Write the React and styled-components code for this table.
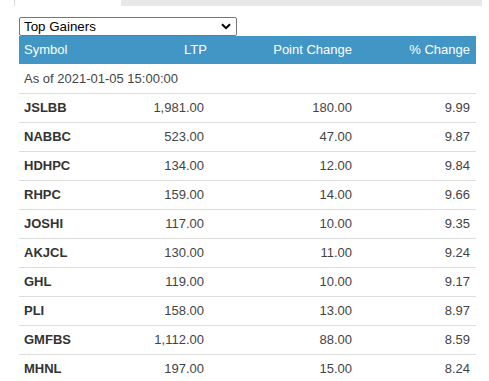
import React from 'react';
import styled, { createGlobalStyle } from 'styled-components';

const rows = [
  ['JSLBB', '1,981.00', '180.00', '9.99'],
  ['NABBC', '523.00', '47.00', '9.87'],
  ['HDHPC', '134.00', '12.00', '9.84'],
  ['RHPC', '159.00', '14.00', '9.66'],
  ['JOSHI', '117.00', '10.00', '9.35'],
  ['AKJCL', '130.00', '11.00', '9.24'],
  ['GHL', '119.00', '10.00', '9.17'],
  ['PLI', '158.00', '13.00', '8.97'],
  ['GMFBS', '1,112.00', '88.00', '8.59'],
  ['MHNL', '197.00', '15.00', '8.24'],
];

const GlobalStyle = createGlobalStyle`
  html, body {
    margin: 0;
    padding: 0;
    background: #fff;
    font-family: "Liberation Sans", Arial, sans-serif;
    font-size: 13px;
    color: #333;
  }
`;

const Wrapper = styled.div`
  margin-left: 14px;
  width: 468px;
`;

const TabStrip = styled.div`
  display: flex;
  height: 6px;
`;

const ActiveTab = styled.div`
  width: 106px;
  border-left: 1px solid #dcdcdc;
  background: #fff;
`;

const RestTabs = styled.div`
  flex: 1;
  background: #e8e8e8;
`;

const Panel = styled.div`
  padding: 11px 6px 0 5px;
`;

const SelectBox = styled.div`
  position: relative;
  width: 218px;
  height: 19px;
`;

const Select = styled.select`
  appearance: none;
  width: 100%;
  height: 100%;
  margin: 0;
  padding: 0 0 0 4px;
  border: 1px solid #767676;
  border-radius: 2px;
  background: #fff;
  font-family: "Liberation Sans", Arial, sans-serif;
  font-size: 13.33px;
  color: #000;
  outline: none;
`;

const Chevron = styled.svg`
  position: absolute;
  right: 6px;
  top: 6px;
  pointer-events: none;
`;

const Table = styled.table`
  width: 457px;
  table-layout: fixed;
  border-collapse: collapse;
`;

const HeadCell = styled.th`
  background: #4296c5;
  color: #fff;
  font-weight: normal;
  text-align: ${(p) => (p.$right ? 'right' : 'left')};
  padding: 5px 6px 5px 5px;
  line-height: 18px;
  height: 18px;
`;

const Row = styled.tr`
  border-top: 1px solid ${(p) => p.$line || '#dddddd'};
`;

const Cell = styled.td`
  text-align: ${(p) => (p.$right ? 'right' : 'left')};
  font-weight: ${(p) => (p.$bold ? 'bold' : 'normal')};
  color: ${(p) => (p.$bold ? '#333' : '#444')};
  padding: 5px ${(p) => p.$pr || 6}px 5px 5px;
  line-height: 18px;
  white-space: nowrap;
`;

export default function App() {
  return (
    <>
      <GlobalStyle />
      <Wrapper>
        <TabStrip>
          <ActiveTab />
          <RestTabs />
        </TabStrip>
        <Panel>
          <SelectBox>
            <Select defaultValue="gainers">
              <option value="gainers">Top Gainers</option>
              <option value="losers">Top Losers</option>
            </Select>
            <Chevron width="10" height="7" viewBox="0 0 10 7">
              <path d="M1 1.2 L5 5.2 L9 1.2" fill="none" stroke="#000" strokeWidth="2" />
            </Chevron>
          </SelectBox>
          <Table>
            <colgroup>
              <col style={{ width: 100 }} />
              <col style={{ width: 94 }} />
              <col style={{ width: 145 }} />
              <col style={{ width: 118 }} />
            </colgroup>
            <thead>
              <tr>
                <HeadCell>Symbol</HeadCell>
                <HeadCell $right>LTP</HeadCell>
                <HeadCell $right>Point Change</HeadCell>
                <HeadCell $right>% Change</HeadCell>
              </tr>
            </thead>
            <tbody>
              <Row $line="#ffffff">
                <Cell colSpan={4}>As of 2021-01-05 15:00:00</Cell>
              </Row>
              {rows.map(([sym, ltp, pt, pct]) => (
                <Row key={sym}>
                  <Cell $bold>{sym}</Cell>
                  <Cell $right $pr={9}>{ltp}</Cell>
                  <Cell $right>{pt}</Cell>
                  <Cell $right>{pct}</Cell>
                </Row>
              ))}
            </tbody>
          </Table>
        </Panel>
      </Wrapper>
    </>
  );
}
